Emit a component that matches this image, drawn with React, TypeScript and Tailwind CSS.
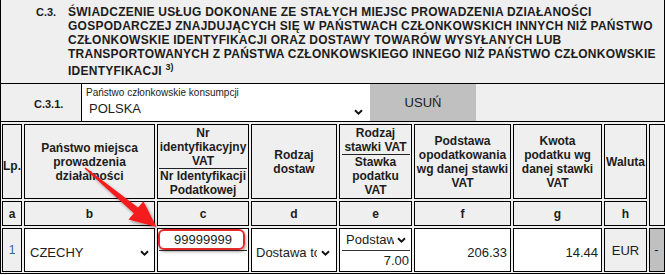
import React from "react";

function Chevron({ className = "" }: { className?: string }) {
  return (
    <svg width="9" height="6" viewBox="0 0 9 6" className={className}>
      <path d="M1 1.2l3.5 3.4L8 1.2" fill="none" stroke="#111" strokeWidth="1.9" />
    </svg>
  );
}

function Arrow() {
  return (
    <svg
      className="absolute left-0 top-0 pointer-events-none"
      width="665"
      height="275"
      viewBox="0 0 665 275"
    >
      <defs>
        <filter id="sh" x="-20%" y="-20%" width="140%" height="140%">
          <feDropShadow dx="1.5" dy="2" stdDeviation="1.6" floodColor="#000" floodOpacity="0.35" />
        </filter>
      </defs>
      <polygon
        filter="url(#sh)"
        fill="#f41c1c"
        points="85.5,167.4 138,207.4 143.5,201.2 156.5,227 128.5,219.6 133.8,213.3 84.5,168.6"
      />
    </svg>
  );
}

export default function App() {
  const head =
    "border border-black bg-[#efefef] flex items-center justify-center text-center font-bold text-[12px] leading-[14px]";
  const letter =
    "border border-black bg-[#efefef] flex items-center justify-center font-bold text-[12px]";
  return (
    <div className="relative w-[665px] h-[275px] overflow-hidden bg-white font-['Liberation_Sans',Arial,sans-serif] text-[#1c1c1c]">
      <div className="border-l border-b border-black bg-[#efefef] w-[665px]">
        {/* Section header */}
        <div className="flex h-[84px] border-b border-r border-black">
          <div className="w-[67px] shrink-0 pl-[35px] pt-[5px] text-[11px] font-bold leading-[14px]">
            C.3.
          </div>
          <div className="flex-1 pr-[2px] pt-[5px] text-[12px] font-bold leading-[14px] tracking-[0.25px]">
            ŚWIADCZENIE USŁUG DOKONANE ZE STAŁYCH MIEJSC PROWADZENIA DZIAŁANOŚCI GOSPODARCZEJ
            ZNAJDUJĄCYCH SIĘ W PAŃSTWACH CZŁONKOWSKICH INNYCH NIŻ PAŃSTWO CZŁONKOWSKIE
            IDENTYFIKACJI ORAZ DOSTAWY TOWARÓW WYSYŁANYCH LUB TRANSPORTOWANYCH Z PAŃSTWA
            CZŁONKOWSKIEGO INNEGO NIŻ PAŃSTWO CZŁONKOWSKIE IDENTYFIKACJI{" "}
            <span className="align-super text-[9px] leading-normal tracking-normal">3)</span>
          </div>
        </div>

        {/* C.3.1 row */}
        <div className="flex h-[38px] border-b border-r border-black">
          <div className="w-[81px] shrink-0 border-r border-black flex items-center pl-[33px] pt-[3px] text-[11px] font-bold">
            C.3.1.
          </div>
          <div className="w-[288px] shrink-0 bg-white flex flex-col pl-[4px] pt-[3px] pr-[7px]">
            <div className="text-[10px] leading-[12px]">Państwo członkowskie konsumpcji</div>
            <div className="flex h-[20px] items-center justify-between pl-[3px]">
              <span className="text-[13px]">POLSKA</span>
              <Chevron className="mt-[5px]" />
            </div>
          </div>
          <div className="w-[106px] shrink-0 bg-[#c0c0c0] flex items-center justify-center text-[13px]">
            USUŃ
          </div>
          <div className="flex-1" />
        </div>

        {/* Table */}
        <div className="grid grid-cols-[20px_131px_92px_86px_73px_97px_89px_43px_16px] grid-rows-[75px_25px_44px] gap-[2px] pl-[1px] pt-[2px] pb-[1px]">
          {/* header row */}
          <div className={head + " pt-[9px]"}>Lp.</div>
          <div className={head}>
            Państwo miejsca
            <br />
            prowadzenia
            <br />
            działalności
          </div>
          <div className="border border-black bg-[#efefef] flex flex-col pt-[1px] text-center font-bold text-[12px] leading-[14px]">
            <div>
              Nr
              <br />
              identyfikacyjny
              <br />
              VAT
            </div>
            <div className="mx-[1px] border-t border-[#222]" />
            <div>
              Nr Identyfikacji
              <br />
              Podatkowej
            </div>
          </div>
          <div className={head}>
            Rodzaj
            <br />
            dostaw
          </div>
          <div className="border border-black bg-[#efefef] flex flex-col pt-[1px] text-center font-bold text-[12px] leading-[14px]">
            <div>
              Rodzaj
              <br />
              stawki VAT
            </div>
            <div className="ml-[2px] mr-[1px] border-t border-[#222]" />
            <div>
              Stawka
              <br />
              podatku
              <br />
              VAT
            </div>
          </div>
          <div className={head}>
            Podstawa
            <br />
            opodatkowania
            <br />
            wg danej stawki
            <br />
            VAT
          </div>
          <div className={head}>
            Kwota
            <br />
            podatku wg
            <br />
            danej stawki
            <br />
            VAT
          </div>
          <div className={head}>Waluta</div>
          <div className="row-span-2 border border-black bg-[#efefef]" />

          {/* letters row */}
          <div className={letter}>a</div>
          <div className={letter}>b</div>
          <div className={letter}>c</div>
          <div className={letter}>d</div>
          <div className={letter}>e</div>
          <div className={letter}>f</div>
          <div className={letter}>g</div>
          <div className={letter}>h</div>

          {/* data row */}
          <div className="border border-black bg-[#efefef] flex items-center justify-center text-[12px] text-[#356593]">
            1
          </div>
          <div className="border border-black bg-white flex items-center justify-between pl-[5px] pr-[5px] pt-[5px] text-[13px]">
            <span>CZECHY</span>
            <Chevron />
          </div>
          <div className="border border-black bg-white flex flex-col">
            <div className="mx-[1px] mt-[1px] h-[21px] border-b border-[#333] flex items-center justify-center text-[13px]">
              99999999
            </div>
          </div>
          <div className="border border-black bg-white flex items-center pl-[4px] pr-[5px] pt-[5px] text-[13px]">
            <span className="w-[61px] overflow-hidden whitespace-nowrap">Dostawa towarów</span>
            <Chevron className="ml-[4px]" />
          </div>
          <div className="border border-black bg-white flex flex-col text-[13px]">
            <div className="ml-[2px] mr-[1px] mt-[1px] h-[21px] border-b border-[#333] flex items-center pl-[4px] pr-[3px]">
              <span className="w-[48px] overflow-hidden whitespace-nowrap">Podstawowa</span>
              <Chevron className="ml-[3px]" />
            </div>
            <div className="flex-1 flex items-center justify-end pr-[2px]">7.00</div>
          </div>
          <div className="border border-black bg-white flex items-center justify-end pr-[3px] pt-[5px] text-[13px]">
            206.33
          </div>
          <div className="border border-black bg-white flex items-center justify-end pr-[3px] pt-[5px] text-[13px]">
            14.44
          </div>
          <div className="border border-black bg-[#efefef] flex items-center justify-center text-[13px] pt-[1px]">
            EUR
          </div>
          <div className="border border-black bg-[#c0c0c0] flex items-center justify-center text-[13px] pr-[1px]">
            -
          </div>
        </div>
      </div>

      {/* annotations */}
      <div className="absolute left-[158px] top-[229px] w-[87px] h-[21px] rounded-[6px] border-2 border-[#e32a2a] shadow-[1px_2px_3px_rgba(0,0,0,0.35)]" />
      <Arrow />
    </div>
  );
}
